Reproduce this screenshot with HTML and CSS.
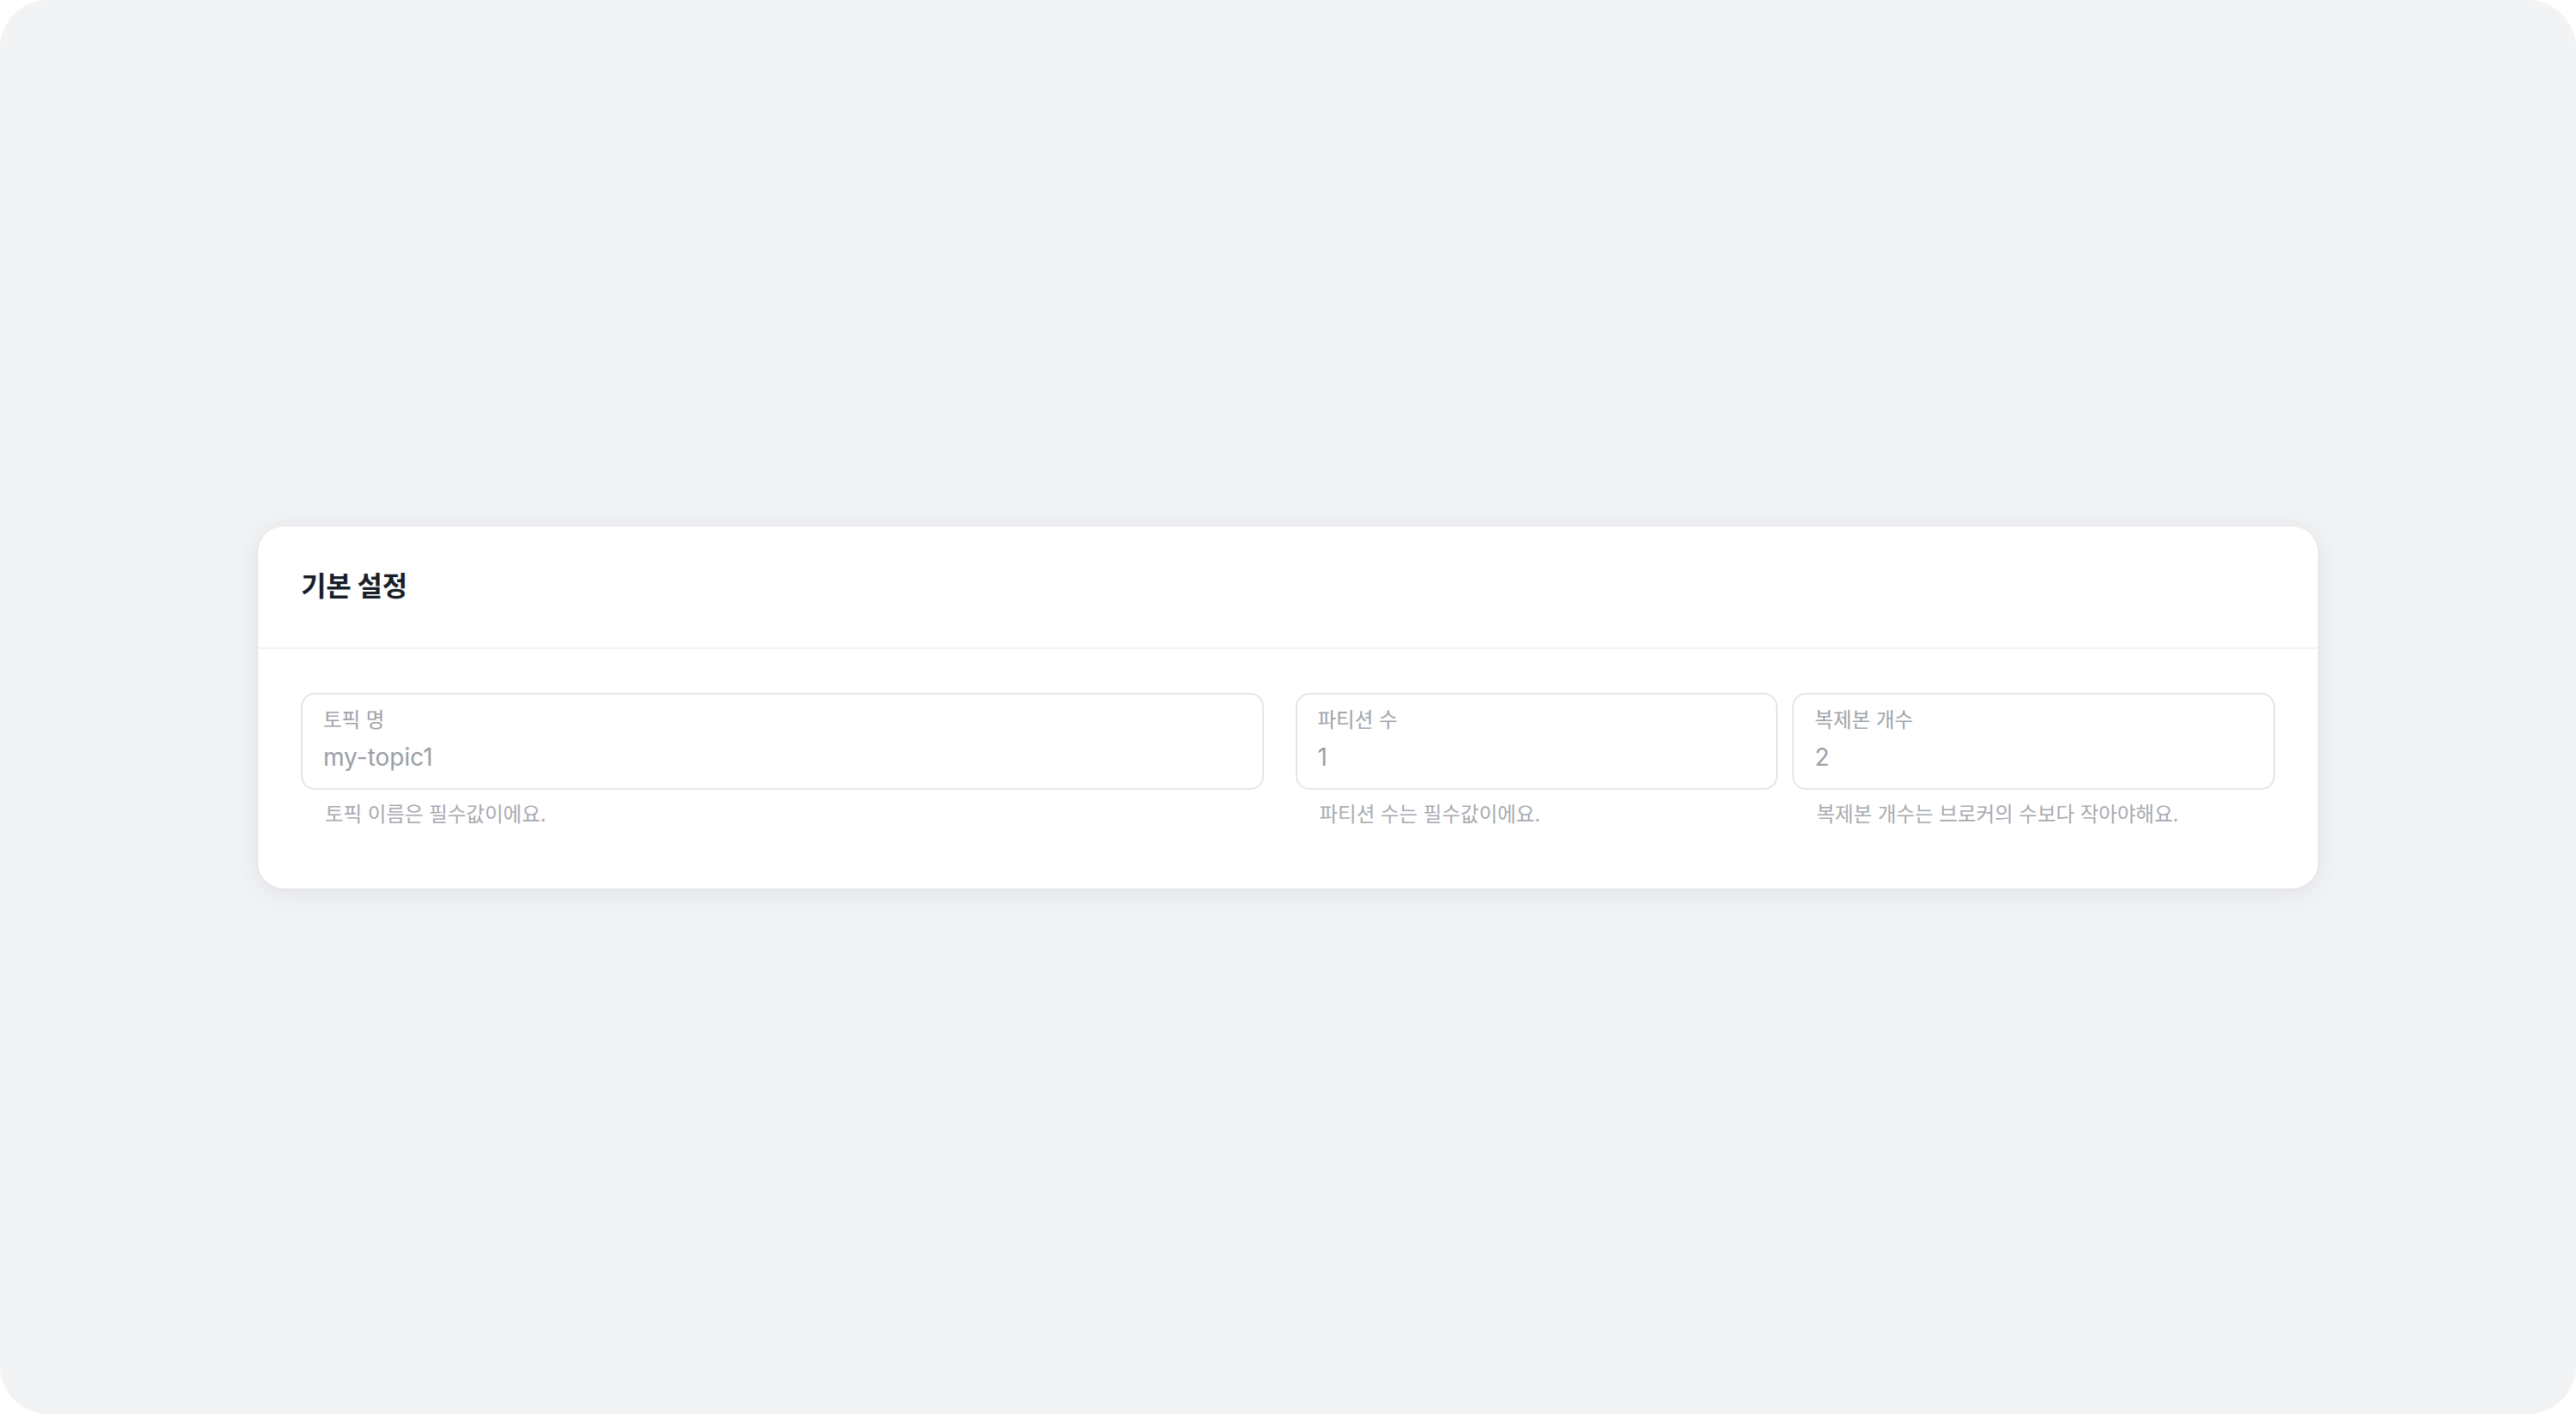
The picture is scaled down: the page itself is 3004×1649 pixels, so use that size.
FILE: index.html
```html
<!DOCTYPE html>
<html lang="ko">
<head>
<meta charset="utf-8">
<title>기본 설정</title>
<link rel="stylesheet" href="styles.css">
</head>
<body>
<div class="screen">
  <section class="card">
    <header class="card-header">
      <h2 class="card-title">기본 설정</h2>
    </header>
    <div class="card-body">
      <div class="fields">
        <div class="field">
          <div class="input-box">
            <div class="input-label">토픽 명</div>
            <div class="input-value">my-topic1</div>
          </div>
          <div class="helper">토픽 이름은 필수값이에요.</div>
        </div>
        <div class="field-pair">
          <div class="field">
            <div class="input-box">
              <div class="input-label">파티션 수</div>
              <div class="input-value">1</div>
            </div>
            <div class="helper">파티션 수는 필수값이에요.</div>
          </div>
          <div class="field">
            <div class="input-box">
              <div class="input-label">복제본 개수</div>
              <div class="input-value">2</div>
            </div>
            <div class="helper">복제본 개수는 브로커의 수보다 작아야해요.</div>
          </div>
        </div>
      </div>
    </div>
  </section>
</div>
</body>
</html>
```

FILE: styles.css
```css
html, body {
  margin: 0;
  padding: 0;
  background: #ffffff;
}

body {
  font-family: Inter, "Noto Sans CJK KR", "Noto Sans", sans-serif;
}

.screen {
  width: 3004px;
  height: 1649px;
  background: #f2f3f5;
  border-radius: 56px;
  display: flex;
  align-items: center;
  justify-content: center;
  box-sizing: border-box;
}

.card {
  width: 2402px;
  background: #ffffff;
  border-radius: 30px;
  box-shadow: 0 4px 36px rgba(20, 24, 40, 0.08), 0 1px 4px rgba(20, 24, 40, 0.03);
}

.card-header {
  height: 143px;
  box-sizing: border-box;
  padding: 0 50px;
  display: flex;
  align-items: center;
  border-bottom: 2px solid #f1f2f5;
}

.card-title {
  margin: 0;
  font-size: 32px;
  font-weight: 700;
  color: #191f28;
  line-height: 40px;
  letter-spacing: -0.3px;
}

.card-body {
  padding: 51px 50px 71px 50px;
}

.fields {
  display: grid;
  grid-template-columns: 1123fr 1143fr;
  column-gap: 37px;
}

.field-pair {
  display: grid;
  grid-template-columns: 1fr 1fr;
  column-gap: 17px;
}

.input-box {
  height: 113px;
  box-sizing: border-box;
  border: 2px solid #e4e5e9;
  border-radius: 16px;
  padding: 15px 24px 0 24px;
  background: #ffffff;
}

.input-label {
  font-size: 23.5px;
  line-height: 30px;
  color: #9fa3a9;
}

.input-value {
  margin-top: 10px;
  font-size: 28px;
  line-height: 36px;
  color: #9a9ea5;
}

.helper {
  margin-top: 14px;
  padding-left: 28px;
  font-size: 23.5px;
  line-height: 30px;
  color: #a7aab0;
}
```
